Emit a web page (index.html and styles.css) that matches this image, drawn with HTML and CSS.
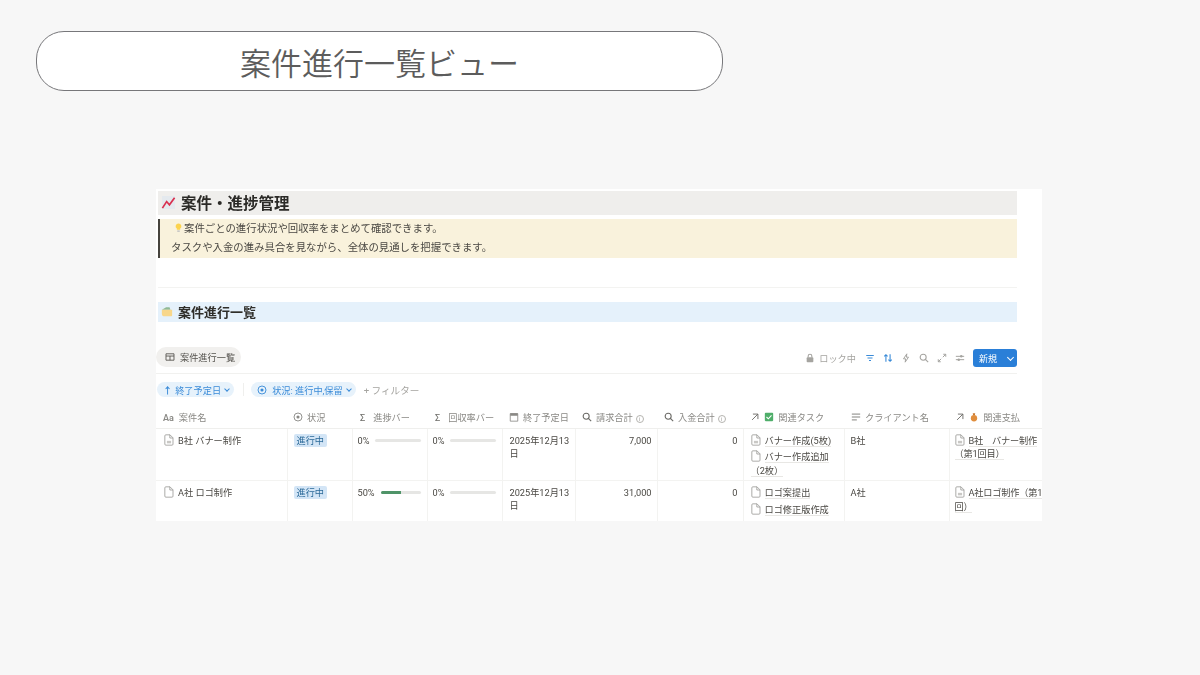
FILE: index.html

```html
<!DOCTYPE html>
<html lang="ja">
<head>
  <meta charset="UTF-8" />
  <title>案件進行一覧ビュー</title>
  <link rel="stylesheet" href="styles.css">
</head>
<body>

<svg class="defs" width="0" height="0">
  <symbol id="doc" viewBox="0 0 12 14">
    <path d="M2.2 .8h5l3.6 3.6v7.6a1.2 1.2 0 0 1-1.2 1.2H2.2A1.2 1.2 0 0 1 1 12V2A1.2 1.2 0 0 1 2.2 .8zM7 .8v3.8h3.8" fill="none" stroke="#9b9a97" stroke-width="1"/>
  </symbol>
  <symbol id="doc-lines" viewBox="0 0 12 14">
    <path d="M2.2 .8h5l3.6 3.6v7.6a1.2 1.2 0 0 1-1.2 1.2H2.2A1.2 1.2 0 0 1 1 12V2A1.2 1.2 0 0 1 2.2 .8zM7 .8v3.8h3.8" fill="none" stroke="#9b9a97" stroke-width="1"/>
    <path d="M3.5 8h5v3h-5z" fill="#c9c8c5"/>
  </symbol>
  <symbol id="search" viewBox="0 0 12 12">
    <circle cx="5" cy="5" r="3.6" fill="none" stroke="currentColor" stroke-width="1.3"/>
    <path d="M7.7 7.7L11 11" stroke="currentColor" stroke-width="1.3"/>
  </symbol>
  <symbol id="relation" viewBox="0 0 12 12">
    <path d="M2.5 9.5L9.5 2.5M3.5 2.5h6v6" fill="none" stroke="currentColor" stroke-width="1.1"/>
  </symbol>
  <symbol id="target" viewBox="0 0 12 12">
    <circle cx="6" cy="6" r="4.8" fill="none" stroke="currentColor" stroke-width="1.1"/>
    <circle cx="6" cy="6" r="1.9" fill="currentColor"/>
  </symbol>
</svg>

<header class="title-pill">案件進行一覧ビュー</header>

<main class="card">
  <h1 class="page-head">
    <svg class="head-icon" viewBox="0 0 16 16">
      <rect x="1" y="1" width="14" height="14" fill="#e4e9ee"/>
      <path d="M1.5 14L6 7l3 3.5L14.5 3" fill="none" stroke="#d9304f" stroke-width="1.8"/>
    </svg>
    案件・進捗管理
  </h1>

  <div class="callout">
    <p>
      <svg class="bulb" viewBox="0 0 8 12">
        <path d="M4 .5a3.4 3.4 0 0 1 2 6.2V8H2V6.7A3.4 3.4 0 0 1 4 .5z" fill="#fcd34d"/>
        <rect x="2.5" y="8.8" width="3" height="2" fill="#c9c8c5"/>
      </svg>案件ごとの進行状況や回収率をまとめて確認できます。
    </p>
    <p>タスクや入金の進み具合を見ながら、全体の見通しを把握できます。</p>
  </div>

  <hr class="rule">

  <h2 class="section-head">
    <svg class="folder-icon" viewBox="0 0 14 12">
      <path d="M1 4L6 1h4l1 3z" fill="#8fb996"/>
      <path d="M1 4h12v6.5a1 1 0 0 1-1 1H4A3 3 0 0 1 1 8.5z" fill="#f8d78b"/>
    </svg>
    案件進行一覧
  </h2>

  <div class="view-bar">
    <div class="view-tab">
      <svg class="tab-icon" viewBox="0 0 12 10">
        <path d="M1 1h10v8H1zM1 3.8h10M6 3.8V9" fill="none" stroke="#55534e" stroke-width="1.1"/>
      </svg>
      案件進行一覧
    </div>
    <div class="tools">
      <span class="lock">
        <svg class="tool-icon" viewBox="0 0 12 12">
          <path d="M3.8 5.5V3.6a2.2 2.2 0 0 1 4.4 0v1.9" fill="none" stroke="#a5a4a0" stroke-width="1.3"/>
          <rect x="2" y="5.2" width="8" height="6" rx="1" fill="#a5a4a0"/>
        </svg>
        ロック中
      </span>
      <svg class="tool-icon blue" viewBox="0 0 12 12">
        <path d="M1.5 3h9M3 6h6M4.8 9h2.4" stroke="currentColor" stroke-width="1.3"/>
      </svg>
      <svg class="tool-icon blue" viewBox="0 0 12 12">
        <path d="M3.5 10.5V2M1.500 4l2-2 2 2M8.500 1.500V10M6.500 8l2 2 2-2" fill="none" stroke="currentColor" stroke-width="1.3"/>
      </svg>
      <svg class="tool-icon" viewBox="0 0 12 12">
        <path d="M7 1L3 7h2.600L5 11l4-6H6.400z" fill="none" stroke="currentColor" stroke-width="1.2"/>
      </svg>
      <svg class="tool-icon"><use href="#search"/></svg>
      <svg class="tool-icon" viewBox="0 0 12 12">
        <path d="M1.500 10.500l3.500-3.500M7 5l3.500-3.500M7.500 1.500h3v3M1.500 7.500v3h3" fill="none" stroke="currentColor" stroke-width="1.2"/>
      </svg>
      <svg class="tool-icon" viewBox="0 0 12 12">
        <path d="M1 4h10M1 8h10" stroke="currentColor" stroke-width="1.2"/>
        <circle cx="7.500" cy="4" r="1.500" fill="currentColor"/>
        <circle cx="4.500" cy="8" r="1.500" fill="currentColor"/>
      </svg>
      <button class="new-btn">新規<span class="new-sep"><i class="chev"></i></span></button>
    </div>
  </div>

  <div class="filters">
    <span class="chip first"><span class="up">↑</span>終了予定日<i class="chev small"></i></span>
    <span class="filter-sep"></span>
    <span class="chip">
      <svg class="chip-icon"><use href="#target"/></svg>
      状況: 進行中,保留<i class="chev small"></i>
    </span>
    <span class="add-filter">+ フィルター</span>
  </div>

  <div class="table-wrap">
    <table class="board">
      <colgroup>
        <col class="c-name"><col class="c-status"><col class="c-bar"><col class="c-bar">
        <col class="c-date"><col class="c-bill"><col class="c-paid"><col class="c-task">
        <col class="c-client"><col class="c-pay">
      </colgroup>
      <thead>
        <tr>
          <th><b class="aa">Aa</b>案件名</th>
          <th class="tight"><svg class="th-icon"><use href="#target"/></svg>状況</th>
          <th><b class="sigma">Σ</b>進捗バー</th>
          <th><b class="sigma">Σ</b>回収率バー</th>
          <th>
            <svg class="th-icon" viewBox="0 0 12 12">
              <path d="M1.500 2h9v9h-9z" fill="none" stroke="currentColor"/>
              <path d="M1.500 1.500h9v3h-9z" fill="currentColor"/>
            </svg>終了予定日
          </th>
          <th><svg class="th-icon dark"><use href="#search"/></svg>請求合計<i class="info">i</i></th>
          <th><svg class="th-icon dark"><use href="#search"/></svg>入金合計<i class="info">i</i></th>
          <th>
            <svg class="th-icon dark rel"><use href="#relation"/></svg>
            <svg class="th-icon" viewBox="0 0 12 12">
              <rect x="1" y="1" width="10" height="10" rx="1" fill="#4fae6a"/>
              <path d="M3 6l2.200 2.200L9 4" fill="none" stroke="#fff" stroke-width="1.300"/>
            </svg>関連タスク
          </th>
          <th>
            <svg class="th-icon dark" viewBox="0 0 12 12">
              <path d="M1 2.500h10M1 6h10M1 9.500h6" stroke="currentColor"/>
            </svg>クライアント名
          </th>
          <th class="tight">
            <svg class="th-icon dark rel"><use href="#relation"/></svg>
            <svg class="th-icon" viewBox="0 0 12 12">
              <path d="M4.500 1.500h3L7 4H5z" fill="#c9772b"/>
              <circle cx="6" cy="7.500" r="3.800" fill="#e08d3c"/>
            </svg>関連支払
          </th>
        </tr>
      </thead>
      <tbody>
        <tr class="row-one">
          <td class="name"><svg class="doc"><use href="#doc-lines"/></svg>B社 バナー制作</td>
          <td class="status"><span class="tag">進行中</span></td>
          <td class="bar"><div class="progress"><span>0%</span><div class="track"></div></div></td>
          <td class="bar"><div class="progress"><span>0%</span><div class="track"></div></div></td>
          <td class="date">2025年12月13日</td>
          <td class="num">7,000</td>
          <td class="num">0</td>
          <td class="links">
            <div><svg class="doc"><use href="#doc-lines"/></svg><span class="link">バナー作成(5枚)</span></div>
            <div><svg class="doc"><use href="#doc"/></svg><span class="link">バナー作成追加（2枚）</span></div>
          </td>
          <td class="client">B社</td>
          <td class="links pay">
            <div><svg class="doc"><use href="#doc-lines"/></svg><span class="link">B社　バナー制作（第1回目）</span></div>
          </td>
        </tr>
        <tr class="row-two">
          <td class="name"><svg class="doc"><use href="#doc"/></svg>A社 ロゴ制作</td>
          <td class="status"><span class="tag">進行中</span></td>
          <td class="bar"><div class="progress"><span>50%</span><div class="track"><div class="fill half"></div></div></div></td>
          <td class="bar"><div class="progress"><span>0%</span><div class="track"></div></div></td>
          <td class="date">2025年12月13日</td>
          <td class="num">31,000</td>
          <td class="num">0</td>
          <td class="links">
            <div><svg class="doc"><use href="#doc"/></svg><span class="link">ロゴ案提出</span></div>
            <div><svg class="doc"><use href="#doc"/></svg><span class="link">ロゴ修正版作成</span></div>
          </td>
          <td class="client">A社</td>
          <td class="links pay">
            <div><svg class="doc"><use href="#doc-lines"/></svg><span class="link">A社ロゴ制作（第1回）</span></div>
          </td>
        </tr>
      </tbody>
    </table>
  </div>
</main>

</body>
</html>
```

FILE: styles.css

```css
* { box-sizing: border-box; }
html, body { height: 100%; }
body { margin: 0; padding: 31px 0 0 36px; background: #f7f7f7; font-family: Roboto, "Noto Sans CJK JP", sans-serif; color: #37352f; overflow: hidden; }
.defs { position: absolute; }

.title-pill { width: 687px; height: 60px; display: flex; align-items: center; justify-content: center; background: #fff; border: 1px solid #77777a; border-radius: 28px; font-family: "Noto Sans CJK JP", sans-serif; font-size: 31px; font-weight: 350; color: #5c5c5c; }

.card { width: 886px; height: 332px; margin: 98px 0 0 120px; padding: 2px 25px 0 2px; background: #fff; overflow: hidden; filter: blur(.4px); }

.page-head { display: flex; align-items: center; gap: 5px; height: 24px; margin: 0; padding: 0 0 2px 3px; background: #efeeec; font-size: 15.5px; font-weight: 700; color: #2b2a27; }
.head-icon { width: 15px; height: 15px; }

.callout { height: 39px; margin-top: 4px; padding: 0 0 0 11px; background: #f9f2dc; border-left: 2px solid #45433d; font-size: 10.4px; line-height: 19px; color: #4a4843; }
.callout p { margin: 0; }
.bulb { width: 7px; height: 10px; margin: 0 2px 0 4px; vertical-align: -1px; }

.rule { height: 1px; margin: 29px 0 14px; border: 0; background: #f3f3f1; }

.section-head { display: flex; align-items: center; gap: 5px; height: 20px; margin: 0; padding: 0 0 2px 3px; background: #e5f1fb; font-size: 13px; font-weight: 700; color: #2f2e2a; }
.folder-icon { width: 12px; height: 11px; }

.view-bar { display: flex; justify-content: space-between; align-items: flex-start; height: 27px; margin: 25px 0 0 -2px; border-bottom: 1px solid #f1f1ef; }
.view-tab { display: flex; align-items: center; gap: 5px; height: 20px; padding: 0 6px 0 9px; background: #f1f0ee; border-radius: 10px; font-size: 9.2px; color: #55534e; }
.tab-icon { width: 10px; height: 8px; }
.tools { display: flex; align-items: center; gap: 8px; height: 18px; margin-top: 2px; color: #a5a4a0; }
.lock { display: flex; align-items: center; gap: 4px; font-size: 9.2px; margin-right: 1px; }
.tool-icon { width: 10px; height: 10px; }
.blue { color: #3a8bd8; }
.new-btn { display: flex; align-items: center; justify-content: space-between; width: 44px; height: 18px; padding: 0 0 0 6px; background: #2a7fd8; border: 0; border-radius: 3px; color: #fff; font-family: inherit; font-size: 9px; }
.new-sep { display: flex; align-items: center; justify-content: center; width: 14px; height: 100%; }
.chev { display: block; width: 5px; height: 5px; margin-top: -2px; border-right: 1px solid #fff; border-bottom: 1px solid #fff; transform: rotate(45deg); }
.chev.small { width: 4px; height: 4px; margin: -2px 1px 0 4px; border-color: #3a8bd8; }

.filters { display: flex; align-items: center; height: 15px; margin-top: 8px; margin-left: -1px; font-size: 9.2px; color: #3a8bd8; }
.chip { display: inline-flex; align-items: center; height: 15px; padding: 0 4px 0 6px; background: #e7f2fb; border-radius: 8px; white-space: nowrap; }
.up { margin-right: 3px; font-weight: 700; }
.filter-sep { width: 1px; height: 13px; margin: 0 7px 0 9px; background: #efefed; }
.chip-icon { width: 10px; height: 10px; margin-right: 5px; }
.add-filter { margin-left: 8px; font-size: 9.6px; color: #a5a4a0; }

.table-wrap { width: 886px; height: 114px; margin: 10px 0 0 -2px; overflow: hidden; }
.board { width: 890px; table-layout: fixed; border-collapse: collapse; font-size: 9.2px; color: #4a4843; }
.c-name { width: 131px; }
.c-status { width: 65px; }
.c-bar { width: 75px; }
.c-date { width: 73px; }
.c-bill { width: 82px; }
.c-paid { width: 86px; }
.c-task { width: 101px; }
.c-client { width: 105px; }
.c-pay { width: 97px; }
.board th { height: 21px; padding: 0 0 0 7px; border-bottom: 1px solid #efefed; font-weight: 400; text-align: left; white-space: nowrap; color: #8a8985; }
.board th.tight { padding-left: 6px; }
.board td { padding: 5px 6px 0; border-right: 1px solid #f3f3f1; vertical-align: top; line-height: 13px; }
.board td:last-child { border-right: 0; }
.row-one td { height: 51px; border-bottom: 1px solid #f3f3f1; }
.row-two td { height: 42px; }
.th-icon { width: 10px; height: 10px; margin-right: 4px; vertical-align: -1px; color: #8a8985; }
.th-icon.dark { color: #6b6a66; }
.th-icon.rel { margin-right: 2px; }
.aa { margin-right: 5px; font-size: 9px; font-weight: 600; color: #8a8985; }
.sigma { margin: 0 8px 0 1px; font-weight: 400; color: #6b6a66; }
.info { display: inline-block; width: 8px; height: 8px; margin-left: 3px; border: 1px solid #b5b4b0; border-radius: 50%; font-size: 6px; font-style: normal; line-height: 6px; text-align: center; color: #a5a4a0; }

.board td.name { padding-left: 8px; white-space: nowrap; }
.doc { width: 10px; height: 12px; margin-right: 4px; vertical-align: -2px; }
.tag { display: inline-block; height: 13px; padding: 0 3px; background: #d3e5f6; border-radius: 2px; line-height: 13px; color: #2c6a99; }
.board td.bar { padding-left: 5px; }
.progress { display: flex; align-items: center; gap: 6px; height: 13px; }
.track { flex: 1; height: 3px; background: #e6e6e4; border-radius: 2px; overflow: hidden; }
.fill { height: 100%; background: #4f9468; }
.half { width: 50%; }
.board td.date { padding: 5px 3px 0 7px; }
.board td.num { padding-right: 5px; text-align: right; }
.board td.links { padding-left: 7px; }
.board td.pay { padding: 5px 0 0 5px; }
.pay .link { letter-spacing: -.2px; }
.links div { margin-bottom: 3px; line-height: 13.5px; }
.link { border-bottom: 1px solid #e8e7e4; }
```
